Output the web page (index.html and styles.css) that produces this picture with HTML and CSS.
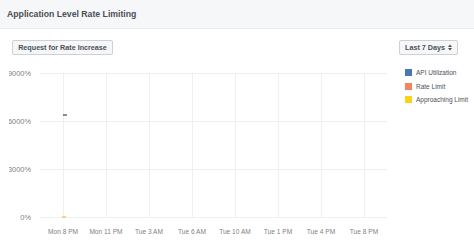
FILE: index.html
```html
<!DOCTYPE html>
<html lang="en">

<head>
    <meta charset="UTF-8">
    <meta name="viewport" content="width=device-width, initial-scale=1.0">
    <title>Application Level Rate Limiting</title>
    <link rel="stylesheet" href="styles.css">
</head>

<body>
    <header class="panel-header">
        <h1>Application Level Rate Limiting</h1>
    </header>

    <div class="toolbar">
        <button class="btn">Request for Rate Increase</button>
        <button class="btn btn-select">Last 7 Days
            <svg class="arrows" viewBox="0 0 4 7" width="4" height="7">
                <path d="M0 3 L2 0.5 L4 3 Z M0 4 L2 6.5 L4 4 Z" fill="#4b4f56" />
            </svg>
        </button>
    </div>

    <div class="chart">
        <svg class="plot" width="400" height="184" viewBox="0 0 400 184">
            <defs>
                <clipPath id="plot-clip">
                    <rect x="9" y="0" width="391" height="184" />
                </clipPath>
            </defs>
            <g class="grid">
                <line x1="40" y1="11" x2="387" y2="11" />
                <line x1="40" y1="59" x2="387" y2="59" />
                <line x1="40" y1="107" x2="387" y2="107" />
                <line x1="40" y1="155" x2="387" y2="155" />
                <line x1="63" y1="11" x2="63" y2="155" />
                <line x1="106" y1="11" x2="106" y2="155" />
                <line x1="149" y1="11" x2="149" y2="155" />
                <line x1="192" y1="11" x2="192" y2="155" />
                <line x1="235" y1="11" x2="235" y2="155" />
                <line x1="278" y1="11" x2="278" y2="155" />
                <line x1="321" y1="11" x2="321" y2="155" />
                <line x1="364" y1="11" x2="364" y2="155" />
            </g>
            <!-- long labels get cut by the left edge, like the original -->
            <g class="y-labels" clip-path="url(#plot-clip)">
                <text x="31" y="12">9000%</text>
                <text x="31" y="60">6000%</text>
                <text x="31" y="108">3000%</text>
                <text x="31" y="156">0%</text>
            </g>
            <g class="x-labels">
                <text x="63" y="170">Mon 8 PM</text>
                <text x="106" y="170">Mon 11 PM</text>
                <text x="149" y="170">Tue 3 AM</text>
                <text x="192" y="170">Tue 6 AM</text>
                <text x="235" y="170">Tue 10 AM</text>
                <text x="278" y="170">Tue 1 PM</text>
                <text x="321" y="170">Tue 4 PM</text>
                <text x="364" y="170">Tue 8 PM</text>
            </g>
            <line class="mark-api" x1="63" y1="53" x2="67" y2="53" />
            <line class="mark-approach" x1="62" y1="155" x2="66" y2="155" />
        </svg>

        <ul class="legend">
            <li><span class="swatch swatch-api"></span>API Utilization</li>
            <li><span class="swatch swatch-rate"></span>Rate Limit</li>
            <li><span class="swatch swatch-approach"></span>Approaching Limit</li>
        </ul>
    </div>
</body>

</html>
```

FILE: styles.css
```css
/* General styling */
* {
    margin: 0;
    padding: 0;
    box-sizing: border-box;
}

body {
    width: 474px;
    height: 246px;
    overflow: hidden;
    background-color: #fff;
    font-family: "Liberation Sans", Arial, sans-serif;
    color: #4b4f56;
}

/* Header */
.panel-header {
    display: flex;
    align-items: center;
    height: 29px;
    padding: 0 7px;
    background-color: #f6f7f9;
    border-bottom: 1px solid #e9ebee;
}

.panel-header h1 {
    font-size: 8.7px;
    font-weight: bold;
    color: #4b4f56;
}

/* Toolbar */
.toolbar {
    display: flex;
    justify-content: space-between;
    padding: 11px 16px 0 12px;
}

.btn {
    display: flex;
    align-items: center;
    justify-content: center;
    gap: 3px;
    height: 15px;
    padding: 0 5px;
    font-family: inherit;
    font-size: 7.2px;
    font-weight: bold;
    color: #4b4f56;
    background-color: #f6f7f9;
    border: 1px solid #ced0d4;
    border-radius: 2px;
}

.btn:first-child {
    width: 101px;
}

.btn-select {
    width: 59px;
}

/* Chart */
.chart {
    display: flex;
    margin-top: 7px;
}

.plot {
    display: block;
    flex: none;
}

.grid line {
    stroke: #efefef;
    stroke-width: 1;
    shape-rendering: crispEdges;
}

.y-labels text,
.x-labels text {
    font-family: "Liberation Sans", Arial, sans-serif;
    font-size: 6.6px;
    fill: #7f7f7f;
    dominant-baseline: middle;
}

.y-labels text {
    font-size: 7.4px;
    text-anchor: end;
}

.x-labels text {
    text-anchor: middle;
}

.mark-api {
    stroke: #3b3f4f;
    stroke-width: 1.2;
}

.mark-approach {
    stroke: #f7c948;
    stroke-width: 1.5;
}

/* Legend */
.legend {
    list-style: none;
    margin-left: 5px;
    padding-top: 4px;
}

.legend li {
    display: flex;
    align-items: center;
    gap: 4px;
    height: 13.5px;
    font-size: 6.5px;
    color: #4b4f56;
    white-space: nowrap;
}

.swatch {
    display: inline-block;
    width: 7px;
    height: 7px;
}

.swatch-api {
    background-color: #4a76b8;
}

.swatch-rate {
    background-color: #f4845f;
}

.swatch-approach {
    background-color: #fcd116;
}
```
